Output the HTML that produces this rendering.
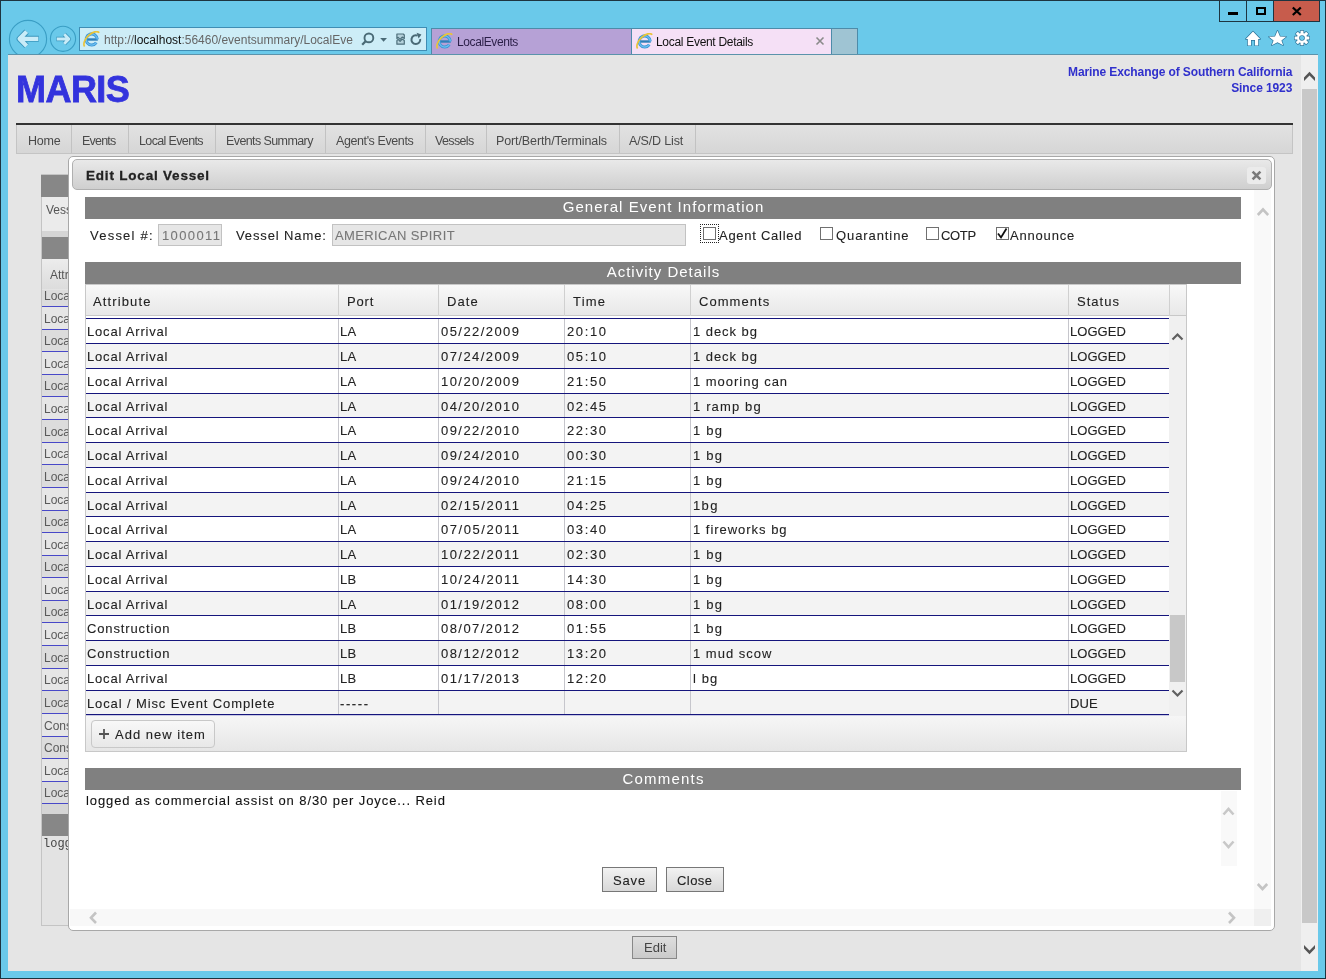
<!DOCTYPE html><html><head><meta charset="utf-8"><style>
html,body{margin:0;padding:0;}
body{width:1326px;height:979px;position:relative;overflow:hidden;background:#6ac9ea;font-family:"Liberation Sans",sans-serif;}
.t{position:absolute;white-space:nowrap;line-height:1;will-change:transform;}
.r{position:absolute;box-sizing:border-box;}
svg{position:absolute;}
</style></head><body>

<div class="r" style="left:1219px;top:0px;width:28px;height:22px;border:1px solid #1d3440;border-top:none;background:#6ac9ea"></div>
<div class="r" style="left:1246px;top:0px;width:28px;height:22px;border:1px solid #1d3440;border-top:none;background:#6ac9ea"></div>
<div class="r" style="left:1273px;top:0px;width:47px;height:22px;border:1px solid #1d3440;border-top:none;background:#c75c4c"></div>
<div class="r" style="left:1228px;top:12px;width:10px;height:3px;background:#000"></div>
<div class="r" style="left:1256px;top:7px;width:10px;height:8px;border:2px solid #000"></div>
<svg style="left:1290px;top:5px" width="14" height="12" viewBox="0 0 14 12"><path d="M2.8 2.5 L10.8 10 M10.8 2.5 L2.8 10" stroke="#000" stroke-width="2.2"/></svg>
<svg style="left:0px;top:14px" width="80" height="40" viewBox="0 14 80 40"><circle cx="28" cy="39" r="18.6" fill="none" stroke="#3a9ec4" stroke-width="1.1"/><circle cx="63" cy="38.8" r="12.6" fill="none" stroke="#3a9ec4" stroke-width="1.1"/><g fill="none" stroke-linejoin="round" stroke-linecap="butt"><path d="M38.8 38.8 H21 M26.6 31.6 L19.6 38.8 L26.6 46" stroke="#3a96bd" stroke-width="6"/><path d="M38.3 38.8 H21 M26.6 31.6 L19.6 38.8 L26.6 46" stroke="#c9ecf8" stroke-width="4.2"/><path d="M56.3 39 H68 M64.2 34.2 L68.9 39 L64.2 43.8" stroke="#3a96bd" stroke-width="4.4"/><path d="M56.8 39 H68 M64.2 34.2 L68.9 39 L64.2 43.8" stroke="#c9ecf8" stroke-width="2.8"/></g></svg>
<div class="r" style="left:79px;top:27px;width:348px;height:24px;background:#cdedf7;border:1px solid #3f8db4"></div>
<svg style="left:83px;top:31px" width="18" height="17" viewBox="0 0 18 17"><rect x="3" y="7.3" width="11.8" height="2.4" fill="#2f7fb8"/><path d="M14.3 8.4 A5.6 5.6 0 1 0 13.3 11.7" fill="none" stroke="#3b95d6" stroke-width="3"/><path d="M14.3 8.4 A5.6 5.6 0 1 0 13.3 11.7" fill="none" stroke="#6cc0f0" stroke-width="1.2"/><path d="M1.6 15.4 A9.5 5 -45 0 1 16.2 1.8" fill="none" stroke="#e9c43a" stroke-width="1.7"/></svg>
<div class="t" style="left:104.0px;top:33.8px;font-size:12px;color:#666;font-weight:normal;letter-spacing:0px;font-family:'Liberation Sans', sans-serif;">http://<span style="color:#111">localhost</span>:56460/eventsummary/LocalEve</div>
<svg style="left:360px;top:31px" width="66" height="17" viewBox="0 0 66 17"><circle cx="8.9" cy="6.9" r="4.4" fill="none" stroke="#4a6a76" stroke-width="1.9"/><path d="M5.6 10.2 L2.2 13.8" stroke="#4a6a76" stroke-width="2.2"/><path d="M20.2 6.9 H27 L23.6 10.8z" fill="#4a6a76"/><path d="M36.9 3 H43.3 L44.3 4 V7.6 L42.2 6.1 L40.1 8.4 L38.1 6.4 L36.9 7.6z" fill="#b5d2dc" stroke="#4d6f7b" stroke-width="1.2" stroke-linejoin="round"/><path d="M36.9 9.6 L38.1 8.4 L40.1 10.3 L42.2 8 L44.3 9.5 V13.2 H36.9z" fill="#b5d2dc" stroke="#4d6f7b" stroke-width="1.2" stroke-linejoin="round"/><path d="M57.6 4.6 A4.4 4.4 0 1 0 60.2 8" fill="none" stroke="#4a6a76" stroke-width="2"/><path d="M56.6 1.8 L61.4 3.6 L58.6 7.4z" fill="#4a6a76"/></svg>
<div class="r" style="left:431px;top:28px;width:200px;height:26px;background:#b6a1d6;border-left:1px solid #4d8ba9;border-top:1px solid #4d8ba9"></div>
<div class="r" style="left:631px;top:28px;width:200px;height:26px;background:#f5e0f6;border-left:1px solid #4d8ba9;border-top:1px solid #4d8ba9"></div>
<div class="r" style="left:831px;top:28px;width:27px;height:26px;background:#9fc4d3;border-left:1px solid #4d8ba9;border-top:1px solid #4d8ba9;border-right:1px solid #4d8ba9"></div>
<svg style="left:436px;top:33px" width="18" height="17" viewBox="0 0 18 17"><rect x="3" y="7.3" width="11.8" height="2.4" fill="#2f7fb8"/><path d="M14.3 8.4 A5.6 5.6 0 1 0 13.3 11.7" fill="none" stroke="#3b95d6" stroke-width="3"/><path d="M14.3 8.4 A5.6 5.6 0 1 0 13.3 11.7" fill="none" stroke="#6cc0f0" stroke-width="1.2"/><path d="M1.6 15.4 A9.5 5 -45 0 1 16.2 1.8" fill="none" stroke="#e9c43a" stroke-width="1.7"/></svg>
<svg style="left:636px;top:33px" width="18" height="17" viewBox="0 0 18 17"><rect x="3" y="7.3" width="11.8" height="2.4" fill="#2f7fb8"/><path d="M14.3 8.4 A5.6 5.6 0 1 0 13.3 11.7" fill="none" stroke="#3b95d6" stroke-width="3"/><path d="M14.3 8.4 A5.6 5.6 0 1 0 13.3 11.7" fill="none" stroke="#6cc0f0" stroke-width="1.2"/><path d="M1.6 15.4 A9.5 5 -45 0 1 16.2 1.8" fill="none" stroke="#e9c43a" stroke-width="1.7"/></svg>
<div class="t" style="left:456.5px;top:36.4px;font-size:12px;color:#2b1f48;font-weight:normal;letter-spacing:-0.4px;font-family:'Liberation Sans', sans-serif;">LocalEvents</div>
<div class="t" style="left:656.0px;top:36.4px;font-size:12px;color:#111;font-weight:normal;letter-spacing:-0.3px;font-family:'Liberation Sans', sans-serif;">Local Event Details</div>
<svg style="left:815px;top:36px" width="10" height="10" viewBox="0 0 10 10"><path d="M1.5 1.5 L8.5 8.5 M8.5 1.5 L1.5 8.5" stroke="#8a8a8a" stroke-width="1.6"/></svg>
<svg style="left:1244px;top:30px" width="70" height="18" viewBox="0 0 70 18"><g fill="#fff" stroke="#2a7096" stroke-width="1.3" paint-order="stroke" stroke-linejoin="round"><path d="M1.8 9 L9 1.5 L16.2 9 L14.2 9 L14.2 15.4 L11 15.4 L11 10 L7 10 L7 15.4 L3.8 15.4 L3.8 9z"/><path d="M33.5 0.8 L36 6.4 L42.2 6.8 L37.4 10.6 L39.2 15.2 L33.5 12.3 L27.8 15.2 L29.6 10.6 L24.8 6.8 L31 6.4z"/><path fill-rule="evenodd" d="M56.52 3.22 L56.51 0.65 L59.49 0.65 L59.48 3.22 L60.33 3.58 L62.14 1.75 L64.25 3.86 L62.42 5.67 L62.78 6.52 L65.35 6.51 L65.35 9.49 L62.78 9.48 L62.42 10.33 L64.25 12.14 L62.14 14.25 L60.33 12.42 L59.48 12.78 L59.49 15.35 L56.51 15.35 L56.52 12.78 L55.67 12.42 L53.86 14.25 L51.75 12.14 L53.58 10.33 L53.22 9.48 L50.65 9.49 L50.65 6.51 L53.22 6.52 L53.58 5.67 L51.75 3.86 L53.86 1.75 L55.67 3.58z M60.8 8.0 A2.8 2.8 0 1 0 55.2 8.0 A2.8 2.8 0 1 0 60.8 8.0z"/></g></svg>
<div class="r" style="left:8px;top:54px;width:1310px;height:917px;background:#e5e5e5"></div>
<div class="r" style="left:8px;top:54px;width:1310px;height:1px;background:#5b93ab"></div>
<div class="r" style="left:1301px;top:55px;width:17px;height:916px;background:#efefef"></div>
<div class="r" style="left:1302px;top:89px;width:15px;height:834px;background:#c8c8c8"></div>
<svg style="left:1302px;top:70px" width="15" height="14" viewBox="0 0 15 14"><path d="M2 11 V7.5 L7.5 1.8 L13 7.5 V11 L7.5 5.5z" fill="#555"/></svg>
<svg style="left:1302px;top:943px" width="15" height="14" viewBox="0 0 15 14"><path d="M2 2 V5.5 L7.5 11.2 L13 5.5 V2 L7.5 7.5z" fill="#555"/></svg>
<div class="t" style="left:16.3px;top:72.3px;font-size:36px;color:#3333dd;font-weight:bold;letter-spacing:-0.55px;font-family:'Liberation Sans', sans-serif;-webkit-text-stroke:0.8px #3333dd;">MARIS</div>
<div class="t" style="right:34px;top:63.5px;font-size:12px;font-weight:bold;color:#3030cc;text-align:right;line-height:16px;letter-spacing:-0.1px">Marine Exchange of Southern California<br>Since 1923</div>
<div class="r" style="left:16px;top:123px;width:1277px;height:2px;background:#333"></div>
<div class="r" style="left:16px;top:125px;width:1277px;height:29px;background:linear-gradient(#e2e2e2,#d6d6d6);border:1px solid #c4c4c4;border-top:none"></div>
<div class="r" style="left:71px;top:125px;width:1px;height:28px;background:#c2c2c2"></div>
<div class="r" style="left:127.5px;top:125px;width:1px;height:28px;background:#c2c2c2"></div>
<div class="r" style="left:215px;top:125px;width:1px;height:28px;background:#c2c2c2"></div>
<div class="r" style="left:324.5px;top:125px;width:1px;height:28px;background:#c2c2c2"></div>
<div class="r" style="left:424.5px;top:125px;width:1px;height:28px;background:#c2c2c2"></div>
<div class="r" style="left:485.5px;top:125px;width:1px;height:28px;background:#c2c2c2"></div>
<div class="r" style="left:618.5px;top:125px;width:1px;height:28px;background:#c2c2c2"></div>
<div class="r" style="left:694.5px;top:125px;width:1px;height:28px;background:#c2c2c2"></div>
<div class="t" style="left:27.7px;top:135.2px;font-size:12.5px;color:#4a4a4a;font-weight:normal;letter-spacing:-0.247px;font-family:'Liberation Sans', sans-serif;">Home</div>
<div class="t" style="left:82.4px;top:135.2px;font-size:12.5px;color:#4a4a4a;font-weight:normal;letter-spacing:-0.803px;font-family:'Liberation Sans', sans-serif;">Events</div>
<div class="t" style="left:139.0px;top:135.2px;font-size:12.5px;color:#4a4a4a;font-weight:normal;letter-spacing:-0.634px;font-family:'Liberation Sans', sans-serif;">Local Events</div>
<div class="t" style="left:226.0px;top:135.2px;font-size:12.5px;color:#4a4a4a;font-weight:normal;letter-spacing:-0.597px;font-family:'Liberation Sans', sans-serif;">Events Summary</div>
<div class="t" style="left:335.7px;top:135.2px;font-size:12.5px;color:#4a4a4a;font-weight:normal;letter-spacing:-0.407px;font-family:'Liberation Sans', sans-serif;">Agent's Events</div>
<div class="t" style="left:435.3px;top:135.2px;font-size:12.5px;color:#4a4a4a;font-weight:normal;letter-spacing:-0.646px;font-family:'Liberation Sans', sans-serif;">Vessels</div>
<div class="t" style="left:496.3px;top:135.2px;font-size:12.5px;color:#4a4a4a;font-weight:normal;letter-spacing:-0.112px;font-family:'Liberation Sans', sans-serif;">Port/Berth/Terminals</div>
<div class="t" style="left:629.1px;top:135.2px;font-size:12.5px;color:#4a4a4a;font-weight:normal;letter-spacing:-0.153px;font-family:'Liberation Sans', sans-serif;">A/S/D List</div>
<div class="r" style="left:41px;top:174px;width:79px;height:752px;background:#e3e3e3;border:1px solid #c4c4c4"></div>
<div class="r" style="left:41px;top:175px;width:79px;height:22px;background:#878787"></div>
<div class="r" style="left:42px;top:197px;width:78px;height:34px;background:#ebebeb"></div>
<div class="t" style="left:46.0px;top:203.8px;font-size:12px;color:#555;font-weight:normal;letter-spacing:0px;font-family:'Liberation Sans', sans-serif;">Vessel</div>
<div class="r" style="left:42px;top:231px;width:78px;height:6px;background:#d5d5d5"></div>
<div class="r" style="left:42px;top:237px;width:78px;height:22px;background:#878787"></div>
<div class="r" style="left:42px;top:259px;width:78px;height:30px;background:linear-gradient(#ececec,#dcdcdc)"></div>
<div class="t" style="left:50.0px;top:268.8px;font-size:12px;color:#555;font-weight:normal;letter-spacing:0px;font-family:'Liberation Sans', sans-serif;">Attribute</div>
<div class="r" style="left:42px;top:290px;width:78px;height:16px;background:#dcdcdc"></div>
<div class="r" style="left:42px;top:306px;width:78px;height:1px;background:#4848c8"></div>
<div class="t" style="left:44.0px;top:289.5px;font-size:12px;color:#5a5a5a;font-weight:normal;letter-spacing:0px;font-family:'Liberation Sans', sans-serif;">Local</div>
<div class="r" style="left:42px;top:307px;width:78px;height:22px;background:#e6e6e6"></div>
<div class="r" style="left:42px;top:329px;width:78px;height:1px;background:#4848c8"></div>
<div class="t" style="left:44.0px;top:312.5px;font-size:12px;color:#5a5a5a;font-weight:normal;letter-spacing:0px;font-family:'Liberation Sans', sans-serif;">Local</div>
<div class="r" style="left:42px;top:330px;width:78px;height:21px;background:#dcdcdc"></div>
<div class="r" style="left:42px;top:351px;width:78px;height:1px;background:#4848c8"></div>
<div class="t" style="left:44.0px;top:334.5px;font-size:12px;color:#5a5a5a;font-weight:normal;letter-spacing:0px;font-family:'Liberation Sans', sans-serif;">Local</div>
<div class="r" style="left:42px;top:352px;width:78px;height:22px;background:#e6e6e6"></div>
<div class="r" style="left:42px;top:374px;width:78px;height:1px;background:#4848c8"></div>
<div class="t" style="left:44.0px;top:357.5px;font-size:12px;color:#5a5a5a;font-weight:normal;letter-spacing:0px;font-family:'Liberation Sans', sans-serif;">Local</div>
<div class="r" style="left:42px;top:375px;width:78px;height:21px;background:#dcdcdc"></div>
<div class="r" style="left:42px;top:396px;width:78px;height:1px;background:#4848c8"></div>
<div class="t" style="left:44.0px;top:379.5px;font-size:12px;color:#5a5a5a;font-weight:normal;letter-spacing:0px;font-family:'Liberation Sans', sans-serif;">Local</div>
<div class="r" style="left:42px;top:397px;width:78px;height:22px;background:#e6e6e6"></div>
<div class="r" style="left:42px;top:419px;width:78px;height:1px;background:#4848c8"></div>
<div class="t" style="left:44.0px;top:402.5px;font-size:12px;color:#5a5a5a;font-weight:normal;letter-spacing:0px;font-family:'Liberation Sans', sans-serif;">Local</div>
<div class="r" style="left:42px;top:420px;width:78px;height:22px;background:#dcdcdc"></div>
<div class="r" style="left:42px;top:442px;width:78px;height:1px;background:#4848c8"></div>
<div class="t" style="left:44.0px;top:425.5px;font-size:12px;color:#5a5a5a;font-weight:normal;letter-spacing:0px;font-family:'Liberation Sans', sans-serif;">Local</div>
<div class="r" style="left:42px;top:443px;width:78px;height:21px;background:#e6e6e6"></div>
<div class="r" style="left:42px;top:464px;width:78px;height:1px;background:#4848c8"></div>
<div class="t" style="left:44.0px;top:447.5px;font-size:12px;color:#5a5a5a;font-weight:normal;letter-spacing:0px;font-family:'Liberation Sans', sans-serif;">Local</div>
<div class="r" style="left:42px;top:465px;width:78px;height:22px;background:#dcdcdc"></div>
<div class="r" style="left:42px;top:487px;width:78px;height:1px;background:#4848c8"></div>
<div class="t" style="left:44.0px;top:470.5px;font-size:12px;color:#5a5a5a;font-weight:normal;letter-spacing:0px;font-family:'Liberation Sans', sans-serif;">Local</div>
<div class="r" style="left:42px;top:488px;width:78px;height:22px;background:#e6e6e6"></div>
<div class="r" style="left:42px;top:510px;width:78px;height:1px;background:#4848c8"></div>
<div class="t" style="left:44.0px;top:493.5px;font-size:12px;color:#5a5a5a;font-weight:normal;letter-spacing:0px;font-family:'Liberation Sans', sans-serif;">Local</div>
<div class="r" style="left:42px;top:511px;width:78px;height:21px;background:#dcdcdc"></div>
<div class="r" style="left:42px;top:532px;width:78px;height:1px;background:#4848c8"></div>
<div class="t" style="left:44.0px;top:515.5px;font-size:12px;color:#5a5a5a;font-weight:normal;letter-spacing:0px;font-family:'Liberation Sans', sans-serif;">Local</div>
<div class="r" style="left:42px;top:533px;width:78px;height:22px;background:#e6e6e6"></div>
<div class="r" style="left:42px;top:555px;width:78px;height:1px;background:#4848c8"></div>
<div class="t" style="left:44.0px;top:538.5px;font-size:12px;color:#5a5a5a;font-weight:normal;letter-spacing:0px;font-family:'Liberation Sans', sans-serif;">Local</div>
<div class="r" style="left:42px;top:556px;width:78px;height:21px;background:#dcdcdc"></div>
<div class="r" style="left:42px;top:577px;width:78px;height:1px;background:#4848c8"></div>
<div class="t" style="left:44.0px;top:560.5px;font-size:12px;color:#5a5a5a;font-weight:normal;letter-spacing:0px;font-family:'Liberation Sans', sans-serif;">Local</div>
<div class="r" style="left:42px;top:578px;width:78px;height:22px;background:#e6e6e6"></div>
<div class="r" style="left:42px;top:600px;width:78px;height:1px;background:#4848c8"></div>
<div class="t" style="left:44.0px;top:583.5px;font-size:12px;color:#5a5a5a;font-weight:normal;letter-spacing:0px;font-family:'Liberation Sans', sans-serif;">Local</div>
<div class="r" style="left:42px;top:601px;width:78px;height:21px;background:#dcdcdc"></div>
<div class="r" style="left:42px;top:622px;width:78px;height:1px;background:#4848c8"></div>
<div class="t" style="left:44.0px;top:605.5px;font-size:12px;color:#5a5a5a;font-weight:normal;letter-spacing:0px;font-family:'Liberation Sans', sans-serif;">Local</div>
<div class="r" style="left:42px;top:623px;width:78px;height:22px;background:#e6e6e6"></div>
<div class="r" style="left:42px;top:645px;width:78px;height:1px;background:#4848c8"></div>
<div class="t" style="left:44.0px;top:628.5px;font-size:12px;color:#5a5a5a;font-weight:normal;letter-spacing:0px;font-family:'Liberation Sans', sans-serif;">Local</div>
<div class="r" style="left:42px;top:646px;width:78px;height:22px;background:#dcdcdc"></div>
<div class="r" style="left:42px;top:668px;width:78px;height:1px;background:#4848c8"></div>
<div class="t" style="left:44.0px;top:651.5px;font-size:12px;color:#5a5a5a;font-weight:normal;letter-spacing:0px;font-family:'Liberation Sans', sans-serif;">Local</div>
<div class="r" style="left:42px;top:669px;width:78px;height:21px;background:#e6e6e6"></div>
<div class="r" style="left:42px;top:690px;width:78px;height:1px;background:#4848c8"></div>
<div class="t" style="left:44.0px;top:673.5px;font-size:12px;color:#5a5a5a;font-weight:normal;letter-spacing:0px;font-family:'Liberation Sans', sans-serif;">Local</div>
<div class="r" style="left:42px;top:691px;width:78px;height:22px;background:#dcdcdc"></div>
<div class="r" style="left:42px;top:713px;width:78px;height:1px;background:#4848c8"></div>
<div class="t" style="left:44.0px;top:696.5px;font-size:12px;color:#5a5a5a;font-weight:normal;letter-spacing:0px;font-family:'Liberation Sans', sans-serif;">Local</div>
<div class="r" style="left:42px;top:714px;width:78px;height:22px;background:#e6e6e6"></div>
<div class="r" style="left:42px;top:736px;width:78px;height:1px;background:#4848c8"></div>
<div class="t" style="left:44.0px;top:719.5px;font-size:12px;color:#5a5a5a;font-weight:normal;letter-spacing:0px;font-family:'Liberation Sans', sans-serif;">Construction</div>
<div class="r" style="left:42px;top:737px;width:78px;height:21px;background:#dcdcdc"></div>
<div class="r" style="left:42px;top:758px;width:78px;height:1px;background:#4848c8"></div>
<div class="t" style="left:44.0px;top:741.5px;font-size:12px;color:#5a5a5a;font-weight:normal;letter-spacing:0px;font-family:'Liberation Sans', sans-serif;">Construction</div>
<div class="r" style="left:42px;top:759px;width:78px;height:22px;background:#e6e6e6"></div>
<div class="r" style="left:42px;top:781px;width:78px;height:1px;background:#4848c8"></div>
<div class="t" style="left:44.0px;top:764.5px;font-size:12px;color:#5a5a5a;font-weight:normal;letter-spacing:0px;font-family:'Liberation Sans', sans-serif;">Local</div>
<div class="r" style="left:42px;top:782px;width:78px;height:21px;background:#dcdcdc"></div>
<div class="r" style="left:42px;top:803px;width:78px;height:1px;background:#4848c8"></div>
<div class="t" style="left:44.0px;top:786.5px;font-size:12px;color:#5a5a5a;font-weight:normal;letter-spacing:0px;font-family:'Liberation Sans', sans-serif;">Local</div>
<div class="r" style="left:42px;top:804px;width:78px;height:10px;background:#d5d5d5"></div>
<div class="r" style="left:42px;top:814px;width:78px;height:22px;background:#878787"></div>
<div class="t" style="left:43.0px;top:837.8px;font-size:12px;color:#444;font-weight:normal;letter-spacing:0px;font-family:'Liberation Mono', monospace;">logged</div>
<div class="r" style="left:68px;top:156px;width:1207px;height:775px;background:#fff;border:1px solid #a8a8a8;border-radius:5px"></div>
<div class="r" style="left:72px;top:159px;width:1200px;height:31px;background:linear-gradient(#e9e9e9,#cfcfcf);border:1px solid #b0b0b0;border-radius:5px"></div>
<div class="t" style="left:86.2px;top:169.1px;font-size:13.5px;color:#222;font-weight:bold;letter-spacing:0.8px;font-family:'Liberation Sans', sans-serif;-webkit-text-stroke:0.3px #222;">Edit Local Vessel</div>
<div class="r" style="left:1247px;top:167px;width:19px;height:17px;background:#ebebeb;border-radius:3px"></div>
<svg style="left:1250px;top:169px" width="13" height="13" viewBox="0 0 13 13"><path d="M2.6 2.6 L10.4 10.4 M10.4 2.6 L2.6 10.4" stroke="#7a7a7a" stroke-width="2.6"/></svg>
<div class="r" style="left:1254px;top:190px;width:17px;height:719px;background:#f9f9f9"></div>
<svg style="left:1256px;top:205px" width="13" height="12" viewBox="0 0 13 12"><path d="M1.8 10 L7 4.5 L12.2 10" fill="none" stroke="#c4c4c4" stroke-width="2.6"/></svg>
<svg style="left:1256px;top:881px" width="13" height="12" viewBox="0 0 13 12"><path d="M1.8 3 L6.5 8 L11.2 3" fill="none" stroke="#c4c4c4" stroke-width="2.6"/></svg>
<div class="r" style="left:70px;top:909px;width:1184px;height:17px;background:#f8f8f8"></div>
<div class="r" style="left:1254px;top:909px;width:17px;height:17px;background:#efefef"></div>
<svg style="left:87px;top:911px" width="12" height="14" viewBox="0 0 12 14"><path d="M9 1.5 L4 6.8 L9 12" fill="none" stroke="#c4c4c4" stroke-width="2.6"/></svg>
<svg style="left:1226px;top:911px" width="12" height="14" viewBox="0 0 12 14"><path d="M3 1.5 L8 6.8 L3 12" fill="none" stroke="#c4c4c4" stroke-width="2.6"/></svg>
<div class="r" style="left:85px;top:197px;width:1156px;height:22px;background:#808080"></div>
<div class="t" style="left:85px;width:1156px;top:199.3px;font-size:15px;color:#fff;text-align:center;letter-spacing:1.064px;text-indent:1.064px">General Event Information</div>
<div class="t" style="left:89.6px;top:228.7px;font-size:13px;color:#222;font-weight:normal;letter-spacing:1.232px;font-family:'Liberation Sans', sans-serif;-webkit-text-stroke:0.1px currentColor;">Vessel #:</div>
<div class="r" style="left:158px;top:224px;width:64px;height:22px;background:#e6e6e6;border:1px solid #c2c2c2"></div>
<div class="t" style="left:161.8px;top:228.7px;font-size:13px;color:#777;font-weight:normal;letter-spacing:1.372px;font-family:'Liberation Sans', sans-serif;-webkit-text-stroke:0.1px currentColor;">1000011</div>
<div class="t" style="left:236.0px;top:228.7px;font-size:13px;color:#222;font-weight:normal;letter-spacing:0.882px;font-family:'Liberation Sans', sans-serif;-webkit-text-stroke:0.1px currentColor;">Vessel Name:</div>
<div class="r" style="left:332px;top:224px;width:354px;height:22px;background:#e6e6e6;border:1px solid #c2c2c2"></div>
<div class="t" style="left:334.6px;top:228.7px;font-size:13px;color:#777;font-weight:normal;letter-spacing:0.389px;font-family:'Liberation Sans', sans-serif;-webkit-text-stroke:0.1px currentColor;">AMERICAN SPIRIT</div>
<div class="r" style="left:700px;top:224px;width:19px;height:19px;border:1px dotted #222"></div>
<div class="r" style="left:703px;top:227px;width:13px;height:13px;border:1px solid #707070;background:#fff"></div>
<div class="r" style="left:819.5px;top:227px;width:13.0px;height:13px;border:1px solid #707070;background:#fff"></div>
<div class="r" style="left:926px;top:227px;width:13px;height:13px;border:1px solid #707070;background:#fff"></div>
<div class="r" style="left:995.5px;top:227px;width:13.0px;height:13px;border:1px solid #707070;background:#fff"></div>
<svg style="left:996px;top:227px" width="12" height="13" viewBox="0 0 12 13"><path d="M2 6.5 L5 10.5 L10.5 1.5" fill="none" stroke="#111" stroke-width="1.8"/></svg>
<div class="t" style="left:719.0px;top:228.5px;font-size:13px;color:#222;font-weight:normal;letter-spacing:0.735px;font-family:'Liberation Sans', sans-serif;-webkit-text-stroke:0.1px currentColor;">Agent Called</div>
<div class="t" style="left:835.5px;top:228.5px;font-size:13px;color:#222;font-weight:normal;letter-spacing:0.912px;font-family:'Liberation Sans', sans-serif;-webkit-text-stroke:0.1px currentColor;">Quarantine</div>
<div class="t" style="left:941.0px;top:228.5px;font-size:13px;color:#222;font-weight:normal;letter-spacing:-0.32px;font-family:'Liberation Sans', sans-serif;-webkit-text-stroke:0.1px currentColor;">COTP</div>
<div class="t" style="left:1010.3px;top:228.5px;font-size:13px;color:#222;font-weight:normal;letter-spacing:0.81px;font-family:'Liberation Sans', sans-serif;-webkit-text-stroke:0.1px currentColor;">Announce</div>
<div class="r" style="left:85px;top:262px;width:1156px;height:22px;background:#808080"></div>
<div class="t" style="left:85px;width:1156px;top:264.0px;font-size:15px;color:#fff;text-align:center;letter-spacing:1.007px;text-indent:1.007px">Activity Details</div>
<div class="r" style="left:85px;top:284px;width:1102px;height:468px;background:#fff;border:1px solid #c8c8c8"></div>
<div class="r" style="left:86px;top:285px;width:1100px;height:31px;background:linear-gradient(#f8f8f8,#e8e8e8);border-bottom:1px solid #c8c8c8"></div>
<div class="r" style="left:338px;top:285px;width:1px;height:31px;background:#d0d0d0"></div>
<div class="r" style="left:438px;top:285px;width:1px;height:31px;background:#d0d0d0"></div>
<div class="r" style="left:564px;top:285px;width:1px;height:31px;background:#d0d0d0"></div>
<div class="r" style="left:690px;top:285px;width:1px;height:31px;background:#d0d0d0"></div>
<div class="r" style="left:1068px;top:285px;width:1px;height:31px;background:#d0d0d0"></div>
<div class="r" style="left:1169px;top:285px;width:1px;height:31px;background:#d0d0d0"></div>
<div class="t" style="left:93.4px;top:294.9px;font-size:13px;color:#222;font-weight:normal;letter-spacing:1.129px;font-family:'Liberation Sans', sans-serif;-webkit-text-stroke:0.1px currentColor;">Attribute</div>
<div class="t" style="left:346.8px;top:294.9px;font-size:13px;color:#222;font-weight:normal;letter-spacing:0.854px;font-family:'Liberation Sans', sans-serif;-webkit-text-stroke:0.1px currentColor;">Port</div>
<div class="t" style="left:447.0px;top:294.9px;font-size:13px;color:#222;font-weight:normal;letter-spacing:1.082px;font-family:'Liberation Sans', sans-serif;-webkit-text-stroke:0.1px currentColor;">Date</div>
<div class="t" style="left:572.7px;top:294.9px;font-size:13px;color:#222;font-weight:normal;letter-spacing:1.187px;font-family:'Liberation Sans', sans-serif;-webkit-text-stroke:0.1px currentColor;">Time</div>
<div class="t" style="left:698.8px;top:294.9px;font-size:13px;color:#222;font-weight:normal;letter-spacing:1.041px;font-family:'Liberation Sans', sans-serif;-webkit-text-stroke:0.1px currentColor;">Comments</div>
<div class="t" style="left:1076.7px;top:294.9px;font-size:13px;color:#222;font-weight:normal;letter-spacing:1.019px;font-family:'Liberation Sans', sans-serif;-webkit-text-stroke:0.1px currentColor;">Status</div>
<div class="r" style="left:86px;top:319px;width:1083px;height:24px;background:#ffffff"></div>
<div class="r" style="left:338px;top:319px;width:1px;height:24px;background:#c6c6cc"></div>
<div class="r" style="left:438px;top:319px;width:1px;height:24px;background:#c6c6cc"></div>
<div class="r" style="left:564px;top:319px;width:1px;height:24px;background:#c6c6cc"></div>
<div class="r" style="left:690px;top:319px;width:1px;height:24px;background:#c6c6cc"></div>
<div class="r" style="left:1068px;top:319px;width:1px;height:24px;background:#c6c6cc"></div>
<div class="t" style="left:87.0px;top:324.6px;font-size:13px;color:#222;font-weight:normal;letter-spacing:0.806px;font-family:'Liberation Sans', sans-serif;-webkit-text-stroke:0.1px currentColor;">Local Arrival</div>
<div class="t" style="left:340.4px;top:324.6px;font-size:13px;color:#222;font-weight:normal;letter-spacing:0.233px;font-family:'Liberation Sans', sans-serif;-webkit-text-stroke:0.1px currentColor;">LA</div>
<div class="t" style="left:440.6px;top:324.6px;font-size:13px;color:#222;font-weight:normal;letter-spacing:1.435px;font-family:'Liberation Sans', sans-serif;-webkit-text-stroke:0.1px currentColor;">05/22/2009</div>
<div class="t" style="left:567.1px;top:324.6px;font-size:13px;color:#222;font-weight:normal;letter-spacing:1.611px;font-family:'Liberation Sans', sans-serif;-webkit-text-stroke:0.1px currentColor;">20:10</div>
<div class="t" style="left:693.2px;top:324.6px;font-size:13px;color:#222;font-weight:normal;letter-spacing:0.945px;font-family:'Liberation Sans', sans-serif;-webkit-text-stroke:0.1px currentColor;">1 deck bg</div>
<div class="t" style="left:1070.3px;top:324.6px;font-size:13px;color:#222;font-weight:normal;letter-spacing:0.047px;font-family:'Liberation Sans', sans-serif;-webkit-text-stroke:0.1px currentColor;">LOGGED</div>
<div class="r" style="left:86px;top:344px;width:1083px;height:24px;background:#f3f3f3"></div>
<div class="r" style="left:338px;top:344px;width:1px;height:24px;background:#c6c6cc"></div>
<div class="r" style="left:438px;top:344px;width:1px;height:24px;background:#c6c6cc"></div>
<div class="r" style="left:564px;top:344px;width:1px;height:24px;background:#c6c6cc"></div>
<div class="r" style="left:690px;top:344px;width:1px;height:24px;background:#c6c6cc"></div>
<div class="r" style="left:1068px;top:344px;width:1px;height:24px;background:#c6c6cc"></div>
<div class="t" style="left:87.0px;top:349.6px;font-size:13px;color:#222;font-weight:normal;letter-spacing:0.806px;font-family:'Liberation Sans', sans-serif;-webkit-text-stroke:0.1px currentColor;">Local Arrival</div>
<div class="t" style="left:340.4px;top:349.6px;font-size:13px;color:#222;font-weight:normal;letter-spacing:0.233px;font-family:'Liberation Sans', sans-serif;-webkit-text-stroke:0.1px currentColor;">LA</div>
<div class="t" style="left:440.6px;top:349.6px;font-size:13px;color:#222;font-weight:normal;letter-spacing:1.435px;font-family:'Liberation Sans', sans-serif;-webkit-text-stroke:0.1px currentColor;">07/24/2009</div>
<div class="t" style="left:567.1px;top:349.6px;font-size:13px;color:#222;font-weight:normal;letter-spacing:1.611px;font-family:'Liberation Sans', sans-serif;-webkit-text-stroke:0.1px currentColor;">05:10</div>
<div class="t" style="left:693.2px;top:349.6px;font-size:13px;color:#222;font-weight:normal;letter-spacing:0.945px;font-family:'Liberation Sans', sans-serif;-webkit-text-stroke:0.1px currentColor;">1 deck bg</div>
<div class="t" style="left:1070.3px;top:349.6px;font-size:13px;color:#222;font-weight:normal;letter-spacing:0.047px;font-family:'Liberation Sans', sans-serif;-webkit-text-stroke:0.1px currentColor;">LOGGED</div>
<div class="r" style="left:86px;top:369px;width:1083px;height:24px;background:#ffffff"></div>
<div class="r" style="left:338px;top:369px;width:1px;height:24px;background:#c6c6cc"></div>
<div class="r" style="left:438px;top:369px;width:1px;height:24px;background:#c6c6cc"></div>
<div class="r" style="left:564px;top:369px;width:1px;height:24px;background:#c6c6cc"></div>
<div class="r" style="left:690px;top:369px;width:1px;height:24px;background:#c6c6cc"></div>
<div class="r" style="left:1068px;top:369px;width:1px;height:24px;background:#c6c6cc"></div>
<div class="t" style="left:87.0px;top:374.6px;font-size:13px;color:#222;font-weight:normal;letter-spacing:0.806px;font-family:'Liberation Sans', sans-serif;-webkit-text-stroke:0.1px currentColor;">Local Arrival</div>
<div class="t" style="left:340.4px;top:374.6px;font-size:13px;color:#222;font-weight:normal;letter-spacing:0.233px;font-family:'Liberation Sans', sans-serif;-webkit-text-stroke:0.1px currentColor;">LA</div>
<div class="t" style="left:440.6px;top:374.6px;font-size:13px;color:#222;font-weight:normal;letter-spacing:1.435px;font-family:'Liberation Sans', sans-serif;-webkit-text-stroke:0.1px currentColor;">10/20/2009</div>
<div class="t" style="left:567.1px;top:374.6px;font-size:13px;color:#222;font-weight:normal;letter-spacing:1.611px;font-family:'Liberation Sans', sans-serif;-webkit-text-stroke:0.1px currentColor;">21:50</div>
<div class="t" style="left:693.2px;top:374.6px;font-size:13px;color:#222;font-weight:normal;letter-spacing:0.977px;font-family:'Liberation Sans', sans-serif;-webkit-text-stroke:0.1px currentColor;">1 mooring can</div>
<div class="t" style="left:1070.3px;top:374.6px;font-size:13px;color:#222;font-weight:normal;letter-spacing:0.047px;font-family:'Liberation Sans', sans-serif;-webkit-text-stroke:0.1px currentColor;">LOGGED</div>
<div class="r" style="left:86px;top:394px;width:1083px;height:23px;background:#f3f3f3"></div>
<div class="r" style="left:338px;top:394px;width:1px;height:23px;background:#c6c6cc"></div>
<div class="r" style="left:438px;top:394px;width:1px;height:23px;background:#c6c6cc"></div>
<div class="r" style="left:564px;top:394px;width:1px;height:23px;background:#c6c6cc"></div>
<div class="r" style="left:690px;top:394px;width:1px;height:23px;background:#c6c6cc"></div>
<div class="r" style="left:1068px;top:394px;width:1px;height:23px;background:#c6c6cc"></div>
<div class="t" style="left:87.0px;top:399.6px;font-size:13px;color:#222;font-weight:normal;letter-spacing:0.806px;font-family:'Liberation Sans', sans-serif;-webkit-text-stroke:0.1px currentColor;">Local Arrival</div>
<div class="t" style="left:340.4px;top:399.6px;font-size:13px;color:#222;font-weight:normal;letter-spacing:0.233px;font-family:'Liberation Sans', sans-serif;-webkit-text-stroke:0.1px currentColor;">LA</div>
<div class="t" style="left:440.6px;top:399.6px;font-size:13px;color:#222;font-weight:normal;letter-spacing:1.435px;font-family:'Liberation Sans', sans-serif;-webkit-text-stroke:0.1px currentColor;">04/20/2010</div>
<div class="t" style="left:567.1px;top:399.6px;font-size:13px;color:#222;font-weight:normal;letter-spacing:1.611px;font-family:'Liberation Sans', sans-serif;-webkit-text-stroke:0.1px currentColor;">02:45</div>
<div class="t" style="left:693.2px;top:399.6px;font-size:13px;color:#222;font-weight:normal;letter-spacing:1.15px;font-family:'Liberation Sans', sans-serif;-webkit-text-stroke:0.1px currentColor;">1 ramp bg</div>
<div class="t" style="left:1070.3px;top:399.6px;font-size:13px;color:#222;font-weight:normal;letter-spacing:0.047px;font-family:'Liberation Sans', sans-serif;-webkit-text-stroke:0.1px currentColor;">LOGGED</div>
<div class="r" style="left:86px;top:418px;width:1083px;height:24px;background:#ffffff"></div>
<div class="r" style="left:338px;top:418px;width:1px;height:24px;background:#c6c6cc"></div>
<div class="r" style="left:438px;top:418px;width:1px;height:24px;background:#c6c6cc"></div>
<div class="r" style="left:564px;top:418px;width:1px;height:24px;background:#c6c6cc"></div>
<div class="r" style="left:690px;top:418px;width:1px;height:24px;background:#c6c6cc"></div>
<div class="r" style="left:1068px;top:418px;width:1px;height:24px;background:#c6c6cc"></div>
<div class="t" style="left:87.0px;top:423.6px;font-size:13px;color:#222;font-weight:normal;letter-spacing:0.806px;font-family:'Liberation Sans', sans-serif;-webkit-text-stroke:0.1px currentColor;">Local Arrival</div>
<div class="t" style="left:340.4px;top:423.6px;font-size:13px;color:#222;font-weight:normal;letter-spacing:0.233px;font-family:'Liberation Sans', sans-serif;-webkit-text-stroke:0.1px currentColor;">LA</div>
<div class="t" style="left:440.6px;top:423.6px;font-size:13px;color:#222;font-weight:normal;letter-spacing:1.435px;font-family:'Liberation Sans', sans-serif;-webkit-text-stroke:0.1px currentColor;">09/22/2010</div>
<div class="t" style="left:567.1px;top:423.6px;font-size:13px;color:#222;font-weight:normal;letter-spacing:1.611px;font-family:'Liberation Sans', sans-serif;-webkit-text-stroke:0.1px currentColor;">22:30</div>
<div class="t" style="left:693.2px;top:423.6px;font-size:13px;color:#222;font-weight:normal;letter-spacing:1.247px;font-family:'Liberation Sans', sans-serif;-webkit-text-stroke:0.1px currentColor;">1 bg</div>
<div class="t" style="left:1070.3px;top:423.6px;font-size:13px;color:#222;font-weight:normal;letter-spacing:0.047px;font-family:'Liberation Sans', sans-serif;-webkit-text-stroke:0.1px currentColor;">LOGGED</div>
<div class="r" style="left:86px;top:443px;width:1083px;height:24px;background:#f3f3f3"></div>
<div class="r" style="left:338px;top:443px;width:1px;height:24px;background:#c6c6cc"></div>
<div class="r" style="left:438px;top:443px;width:1px;height:24px;background:#c6c6cc"></div>
<div class="r" style="left:564px;top:443px;width:1px;height:24px;background:#c6c6cc"></div>
<div class="r" style="left:690px;top:443px;width:1px;height:24px;background:#c6c6cc"></div>
<div class="r" style="left:1068px;top:443px;width:1px;height:24px;background:#c6c6cc"></div>
<div class="t" style="left:87.0px;top:448.6px;font-size:13px;color:#222;font-weight:normal;letter-spacing:0.806px;font-family:'Liberation Sans', sans-serif;-webkit-text-stroke:0.1px currentColor;">Local Arrival</div>
<div class="t" style="left:340.4px;top:448.6px;font-size:13px;color:#222;font-weight:normal;letter-spacing:0.233px;font-family:'Liberation Sans', sans-serif;-webkit-text-stroke:0.1px currentColor;">LA</div>
<div class="t" style="left:440.6px;top:448.6px;font-size:13px;color:#222;font-weight:normal;letter-spacing:1.435px;font-family:'Liberation Sans', sans-serif;-webkit-text-stroke:0.1px currentColor;">09/24/2010</div>
<div class="t" style="left:567.1px;top:448.6px;font-size:13px;color:#222;font-weight:normal;letter-spacing:1.611px;font-family:'Liberation Sans', sans-serif;-webkit-text-stroke:0.1px currentColor;">00:30</div>
<div class="t" style="left:693.2px;top:448.6px;font-size:13px;color:#222;font-weight:normal;letter-spacing:1.247px;font-family:'Liberation Sans', sans-serif;-webkit-text-stroke:0.1px currentColor;">1 bg</div>
<div class="t" style="left:1070.3px;top:448.6px;font-size:13px;color:#222;font-weight:normal;letter-spacing:0.047px;font-family:'Liberation Sans', sans-serif;-webkit-text-stroke:0.1px currentColor;">LOGGED</div>
<div class="r" style="left:86px;top:468px;width:1083px;height:24px;background:#ffffff"></div>
<div class="r" style="left:338px;top:468px;width:1px;height:24px;background:#c6c6cc"></div>
<div class="r" style="left:438px;top:468px;width:1px;height:24px;background:#c6c6cc"></div>
<div class="r" style="left:564px;top:468px;width:1px;height:24px;background:#c6c6cc"></div>
<div class="r" style="left:690px;top:468px;width:1px;height:24px;background:#c6c6cc"></div>
<div class="r" style="left:1068px;top:468px;width:1px;height:24px;background:#c6c6cc"></div>
<div class="t" style="left:87.0px;top:473.6px;font-size:13px;color:#222;font-weight:normal;letter-spacing:0.806px;font-family:'Liberation Sans', sans-serif;-webkit-text-stroke:0.1px currentColor;">Local Arrival</div>
<div class="t" style="left:340.4px;top:473.6px;font-size:13px;color:#222;font-weight:normal;letter-spacing:0.233px;font-family:'Liberation Sans', sans-serif;-webkit-text-stroke:0.1px currentColor;">LA</div>
<div class="t" style="left:440.6px;top:473.6px;font-size:13px;color:#222;font-weight:normal;letter-spacing:1.435px;font-family:'Liberation Sans', sans-serif;-webkit-text-stroke:0.1px currentColor;">09/24/2010</div>
<div class="t" style="left:567.1px;top:473.6px;font-size:13px;color:#222;font-weight:normal;letter-spacing:1.611px;font-family:'Liberation Sans', sans-serif;-webkit-text-stroke:0.1px currentColor;">21:15</div>
<div class="t" style="left:693.2px;top:473.6px;font-size:13px;color:#222;font-weight:normal;letter-spacing:1.247px;font-family:'Liberation Sans', sans-serif;-webkit-text-stroke:0.1px currentColor;">1 bg</div>
<div class="t" style="left:1070.3px;top:473.6px;font-size:13px;color:#222;font-weight:normal;letter-spacing:0.047px;font-family:'Liberation Sans', sans-serif;-webkit-text-stroke:0.1px currentColor;">LOGGED</div>
<div class="r" style="left:86px;top:493px;width:1083px;height:23px;background:#f3f3f3"></div>
<div class="r" style="left:338px;top:493px;width:1px;height:23px;background:#c6c6cc"></div>
<div class="r" style="left:438px;top:493px;width:1px;height:23px;background:#c6c6cc"></div>
<div class="r" style="left:564px;top:493px;width:1px;height:23px;background:#c6c6cc"></div>
<div class="r" style="left:690px;top:493px;width:1px;height:23px;background:#c6c6cc"></div>
<div class="r" style="left:1068px;top:493px;width:1px;height:23px;background:#c6c6cc"></div>
<div class="t" style="left:87.0px;top:498.6px;font-size:13px;color:#222;font-weight:normal;letter-spacing:0.806px;font-family:'Liberation Sans', sans-serif;-webkit-text-stroke:0.1px currentColor;">Local Arrival</div>
<div class="t" style="left:340.4px;top:498.6px;font-size:13px;color:#222;font-weight:normal;letter-spacing:0.233px;font-family:'Liberation Sans', sans-serif;-webkit-text-stroke:0.1px currentColor;">LA</div>
<div class="t" style="left:440.6px;top:498.6px;font-size:13px;color:#222;font-weight:normal;letter-spacing:1.542px;font-family:'Liberation Sans', sans-serif;-webkit-text-stroke:0.1px currentColor;">02/15/2011</div>
<div class="t" style="left:567.1px;top:498.6px;font-size:13px;color:#222;font-weight:normal;letter-spacing:1.611px;font-family:'Liberation Sans', sans-serif;-webkit-text-stroke:0.1px currentColor;">04:25</div>
<div class="t" style="left:693.2px;top:498.6px;font-size:13px;color:#222;font-weight:normal;letter-spacing:1.388px;font-family:'Liberation Sans', sans-serif;-webkit-text-stroke:0.1px currentColor;">1bg</div>
<div class="t" style="left:1070.3px;top:498.6px;font-size:13px;color:#222;font-weight:normal;letter-spacing:0.047px;font-family:'Liberation Sans', sans-serif;-webkit-text-stroke:0.1px currentColor;">LOGGED</div>
<div class="r" style="left:86px;top:517px;width:1083px;height:24px;background:#ffffff"></div>
<div class="r" style="left:338px;top:517px;width:1px;height:24px;background:#c6c6cc"></div>
<div class="r" style="left:438px;top:517px;width:1px;height:24px;background:#c6c6cc"></div>
<div class="r" style="left:564px;top:517px;width:1px;height:24px;background:#c6c6cc"></div>
<div class="r" style="left:690px;top:517px;width:1px;height:24px;background:#c6c6cc"></div>
<div class="r" style="left:1068px;top:517px;width:1px;height:24px;background:#c6c6cc"></div>
<div class="t" style="left:87.0px;top:522.6px;font-size:13px;color:#222;font-weight:normal;letter-spacing:0.806px;font-family:'Liberation Sans', sans-serif;-webkit-text-stroke:0.1px currentColor;">Local Arrival</div>
<div class="t" style="left:340.4px;top:522.6px;font-size:13px;color:#222;font-weight:normal;letter-spacing:0.233px;font-family:'Liberation Sans', sans-serif;-webkit-text-stroke:0.1px currentColor;">LA</div>
<div class="t" style="left:440.6px;top:522.6px;font-size:13px;color:#222;font-weight:normal;letter-spacing:1.542px;font-family:'Liberation Sans', sans-serif;-webkit-text-stroke:0.1px currentColor;">07/05/2011</div>
<div class="t" style="left:567.1px;top:522.6px;font-size:13px;color:#222;font-weight:normal;letter-spacing:1.611px;font-family:'Liberation Sans', sans-serif;-webkit-text-stroke:0.1px currentColor;">03:40</div>
<div class="t" style="left:693.2px;top:522.6px;font-size:13px;color:#222;font-weight:normal;letter-spacing:0.975px;font-family:'Liberation Sans', sans-serif;-webkit-text-stroke:0.1px currentColor;">1 fireworks bg</div>
<div class="t" style="left:1070.3px;top:522.6px;font-size:13px;color:#222;font-weight:normal;letter-spacing:0.047px;font-family:'Liberation Sans', sans-serif;-webkit-text-stroke:0.1px currentColor;">LOGGED</div>
<div class="r" style="left:86px;top:542px;width:1083px;height:24px;background:#f3f3f3"></div>
<div class="r" style="left:338px;top:542px;width:1px;height:24px;background:#c6c6cc"></div>
<div class="r" style="left:438px;top:542px;width:1px;height:24px;background:#c6c6cc"></div>
<div class="r" style="left:564px;top:542px;width:1px;height:24px;background:#c6c6cc"></div>
<div class="r" style="left:690px;top:542px;width:1px;height:24px;background:#c6c6cc"></div>
<div class="r" style="left:1068px;top:542px;width:1px;height:24px;background:#c6c6cc"></div>
<div class="t" style="left:87.0px;top:547.6px;font-size:13px;color:#222;font-weight:normal;letter-spacing:0.806px;font-family:'Liberation Sans', sans-serif;-webkit-text-stroke:0.1px currentColor;">Local Arrival</div>
<div class="t" style="left:340.4px;top:547.6px;font-size:13px;color:#222;font-weight:normal;letter-spacing:0.233px;font-family:'Liberation Sans', sans-serif;-webkit-text-stroke:0.1px currentColor;">LA</div>
<div class="t" style="left:440.6px;top:547.6px;font-size:13px;color:#222;font-weight:normal;letter-spacing:1.542px;font-family:'Liberation Sans', sans-serif;-webkit-text-stroke:0.1px currentColor;">10/22/2011</div>
<div class="t" style="left:567.1px;top:547.6px;font-size:13px;color:#222;font-weight:normal;letter-spacing:1.611px;font-family:'Liberation Sans', sans-serif;-webkit-text-stroke:0.1px currentColor;">02:30</div>
<div class="t" style="left:693.2px;top:547.6px;font-size:13px;color:#222;font-weight:normal;letter-spacing:1.247px;font-family:'Liberation Sans', sans-serif;-webkit-text-stroke:0.1px currentColor;">1 bg</div>
<div class="t" style="left:1070.3px;top:547.6px;font-size:13px;color:#222;font-weight:normal;letter-spacing:0.047px;font-family:'Liberation Sans', sans-serif;-webkit-text-stroke:0.1px currentColor;">LOGGED</div>
<div class="r" style="left:86px;top:567px;width:1083px;height:24px;background:#ffffff"></div>
<div class="r" style="left:338px;top:567px;width:1px;height:24px;background:#c6c6cc"></div>
<div class="r" style="left:438px;top:567px;width:1px;height:24px;background:#c6c6cc"></div>
<div class="r" style="left:564px;top:567px;width:1px;height:24px;background:#c6c6cc"></div>
<div class="r" style="left:690px;top:567px;width:1px;height:24px;background:#c6c6cc"></div>
<div class="r" style="left:1068px;top:567px;width:1px;height:24px;background:#c6c6cc"></div>
<div class="t" style="left:87.0px;top:572.6px;font-size:13px;color:#222;font-weight:normal;letter-spacing:0.806px;font-family:'Liberation Sans', sans-serif;-webkit-text-stroke:0.1px currentColor;">Local Arrival</div>
<div class="t" style="left:340.4px;top:572.6px;font-size:13px;color:#222;font-weight:normal;letter-spacing:0.259px;font-family:'Liberation Sans', sans-serif;-webkit-text-stroke:0.1px currentColor;">LB</div>
<div class="t" style="left:440.6px;top:572.6px;font-size:13px;color:#222;font-weight:normal;letter-spacing:1.542px;font-family:'Liberation Sans', sans-serif;-webkit-text-stroke:0.1px currentColor;">10/24/2011</div>
<div class="t" style="left:567.1px;top:572.6px;font-size:13px;color:#222;font-weight:normal;letter-spacing:1.611px;font-family:'Liberation Sans', sans-serif;-webkit-text-stroke:0.1px currentColor;">14:30</div>
<div class="t" style="left:693.2px;top:572.6px;font-size:13px;color:#222;font-weight:normal;letter-spacing:1.247px;font-family:'Liberation Sans', sans-serif;-webkit-text-stroke:0.1px currentColor;">1 bg</div>
<div class="t" style="left:1070.3px;top:572.6px;font-size:13px;color:#222;font-weight:normal;letter-spacing:0.047px;font-family:'Liberation Sans', sans-serif;-webkit-text-stroke:0.1px currentColor;">LOGGED</div>
<div class="r" style="left:86px;top:592px;width:1083px;height:23px;background:#f3f3f3"></div>
<div class="r" style="left:338px;top:592px;width:1px;height:23px;background:#c6c6cc"></div>
<div class="r" style="left:438px;top:592px;width:1px;height:23px;background:#c6c6cc"></div>
<div class="r" style="left:564px;top:592px;width:1px;height:23px;background:#c6c6cc"></div>
<div class="r" style="left:690px;top:592px;width:1px;height:23px;background:#c6c6cc"></div>
<div class="r" style="left:1068px;top:592px;width:1px;height:23px;background:#c6c6cc"></div>
<div class="t" style="left:87.0px;top:597.6px;font-size:13px;color:#222;font-weight:normal;letter-spacing:0.806px;font-family:'Liberation Sans', sans-serif;-webkit-text-stroke:0.1px currentColor;">Local Arrival</div>
<div class="t" style="left:340.4px;top:597.6px;font-size:13px;color:#222;font-weight:normal;letter-spacing:0.233px;font-family:'Liberation Sans', sans-serif;-webkit-text-stroke:0.1px currentColor;">LA</div>
<div class="t" style="left:440.6px;top:597.6px;font-size:13px;color:#222;font-weight:normal;letter-spacing:1.435px;font-family:'Liberation Sans', sans-serif;-webkit-text-stroke:0.1px currentColor;">01/19/2012</div>
<div class="t" style="left:567.1px;top:597.6px;font-size:13px;color:#222;font-weight:normal;letter-spacing:1.611px;font-family:'Liberation Sans', sans-serif;-webkit-text-stroke:0.1px currentColor;">08:00</div>
<div class="t" style="left:693.2px;top:597.6px;font-size:13px;color:#222;font-weight:normal;letter-spacing:1.247px;font-family:'Liberation Sans', sans-serif;-webkit-text-stroke:0.1px currentColor;">1 bg</div>
<div class="t" style="left:1070.3px;top:597.6px;font-size:13px;color:#222;font-weight:normal;letter-spacing:0.047px;font-family:'Liberation Sans', sans-serif;-webkit-text-stroke:0.1px currentColor;">LOGGED</div>
<div class="r" style="left:86px;top:616px;width:1083px;height:24px;background:#ffffff"></div>
<div class="r" style="left:338px;top:616px;width:1px;height:24px;background:#c6c6cc"></div>
<div class="r" style="left:438px;top:616px;width:1px;height:24px;background:#c6c6cc"></div>
<div class="r" style="left:564px;top:616px;width:1px;height:24px;background:#c6c6cc"></div>
<div class="r" style="left:690px;top:616px;width:1px;height:24px;background:#c6c6cc"></div>
<div class="r" style="left:1068px;top:616px;width:1px;height:24px;background:#c6c6cc"></div>
<div class="t" style="left:87.0px;top:621.6px;font-size:13px;color:#222;font-weight:normal;letter-spacing:0.861px;font-family:'Liberation Sans', sans-serif;-webkit-text-stroke:0.1px currentColor;">Construction</div>
<div class="t" style="left:340.4px;top:621.6px;font-size:13px;color:#222;font-weight:normal;letter-spacing:0.259px;font-family:'Liberation Sans', sans-serif;-webkit-text-stroke:0.1px currentColor;">LB</div>
<div class="t" style="left:440.6px;top:621.6px;font-size:13px;color:#222;font-weight:normal;letter-spacing:1.435px;font-family:'Liberation Sans', sans-serif;-webkit-text-stroke:0.1px currentColor;">08/07/2012</div>
<div class="t" style="left:567.1px;top:621.6px;font-size:13px;color:#222;font-weight:normal;letter-spacing:1.611px;font-family:'Liberation Sans', sans-serif;-webkit-text-stroke:0.1px currentColor;">01:55</div>
<div class="t" style="left:693.2px;top:621.6px;font-size:13px;color:#222;font-weight:normal;letter-spacing:1.247px;font-family:'Liberation Sans', sans-serif;-webkit-text-stroke:0.1px currentColor;">1 bg</div>
<div class="t" style="left:1070.3px;top:621.6px;font-size:13px;color:#222;font-weight:normal;letter-spacing:0.047px;font-family:'Liberation Sans', sans-serif;-webkit-text-stroke:0.1px currentColor;">LOGGED</div>
<div class="r" style="left:86px;top:641px;width:1083px;height:24px;background:#f3f3f3"></div>
<div class="r" style="left:338px;top:641px;width:1px;height:24px;background:#c6c6cc"></div>
<div class="r" style="left:438px;top:641px;width:1px;height:24px;background:#c6c6cc"></div>
<div class="r" style="left:564px;top:641px;width:1px;height:24px;background:#c6c6cc"></div>
<div class="r" style="left:690px;top:641px;width:1px;height:24px;background:#c6c6cc"></div>
<div class="r" style="left:1068px;top:641px;width:1px;height:24px;background:#c6c6cc"></div>
<div class="t" style="left:87.0px;top:646.6px;font-size:13px;color:#222;font-weight:normal;letter-spacing:0.861px;font-family:'Liberation Sans', sans-serif;-webkit-text-stroke:0.1px currentColor;">Construction</div>
<div class="t" style="left:340.4px;top:646.6px;font-size:13px;color:#222;font-weight:normal;letter-spacing:0.259px;font-family:'Liberation Sans', sans-serif;-webkit-text-stroke:0.1px currentColor;">LB</div>
<div class="t" style="left:440.6px;top:646.6px;font-size:13px;color:#222;font-weight:normal;letter-spacing:1.435px;font-family:'Liberation Sans', sans-serif;-webkit-text-stroke:0.1px currentColor;">08/12/2012</div>
<div class="t" style="left:567.1px;top:646.6px;font-size:13px;color:#222;font-weight:normal;letter-spacing:1.611px;font-family:'Liberation Sans', sans-serif;-webkit-text-stroke:0.1px currentColor;">13:20</div>
<div class="t" style="left:693.2px;top:646.6px;font-size:13px;color:#222;font-weight:normal;letter-spacing:1.012px;font-family:'Liberation Sans', sans-serif;-webkit-text-stroke:0.1px currentColor;">1 mud scow</div>
<div class="t" style="left:1070.3px;top:646.6px;font-size:13px;color:#222;font-weight:normal;letter-spacing:0.047px;font-family:'Liberation Sans', sans-serif;-webkit-text-stroke:0.1px currentColor;">LOGGED</div>
<div class="r" style="left:86px;top:666px;width:1083px;height:24px;background:#ffffff"></div>
<div class="r" style="left:338px;top:666px;width:1px;height:24px;background:#c6c6cc"></div>
<div class="r" style="left:438px;top:666px;width:1px;height:24px;background:#c6c6cc"></div>
<div class="r" style="left:564px;top:666px;width:1px;height:24px;background:#c6c6cc"></div>
<div class="r" style="left:690px;top:666px;width:1px;height:24px;background:#c6c6cc"></div>
<div class="r" style="left:1068px;top:666px;width:1px;height:24px;background:#c6c6cc"></div>
<div class="t" style="left:87.0px;top:671.6px;font-size:13px;color:#222;font-weight:normal;letter-spacing:0.806px;font-family:'Liberation Sans', sans-serif;-webkit-text-stroke:0.1px currentColor;">Local Arrival</div>
<div class="t" style="left:340.4px;top:671.6px;font-size:13px;color:#222;font-weight:normal;letter-spacing:0.259px;font-family:'Liberation Sans', sans-serif;-webkit-text-stroke:0.1px currentColor;">LB</div>
<div class="t" style="left:440.6px;top:671.6px;font-size:13px;color:#222;font-weight:normal;letter-spacing:1.435px;font-family:'Liberation Sans', sans-serif;-webkit-text-stroke:0.1px currentColor;">01/17/2013</div>
<div class="t" style="left:567.1px;top:671.6px;font-size:13px;color:#222;font-weight:normal;letter-spacing:1.611px;font-family:'Liberation Sans', sans-serif;-webkit-text-stroke:0.1px currentColor;">12:20</div>
<div class="t" style="left:693.2px;top:671.6px;font-size:13px;color:#222;font-weight:normal;letter-spacing:1.126px;font-family:'Liberation Sans', sans-serif;-webkit-text-stroke:0.1px currentColor;">l bg</div>
<div class="t" style="left:1070.3px;top:671.6px;font-size:13px;color:#222;font-weight:normal;letter-spacing:0.047px;font-family:'Liberation Sans', sans-serif;-webkit-text-stroke:0.1px currentColor;">LOGGED</div>
<div class="r" style="left:86px;top:691px;width:1083px;height:23px;background:#f3f3f3"></div>
<div class="r" style="left:338px;top:691px;width:1px;height:23px;background:#c6c6cc"></div>
<div class="r" style="left:438px;top:691px;width:1px;height:23px;background:#c6c6cc"></div>
<div class="r" style="left:564px;top:691px;width:1px;height:23px;background:#c6c6cc"></div>
<div class="r" style="left:690px;top:691px;width:1px;height:23px;background:#c6c6cc"></div>
<div class="r" style="left:1068px;top:691px;width:1px;height:23px;background:#c6c6cc"></div>
<div class="t" style="left:86.9px;top:696.6px;font-size:13px;color:#222;font-weight:normal;letter-spacing:0.879px;font-family:'Liberation Sans', sans-serif;-webkit-text-stroke:0.1px currentColor;">Local / Misc Event Complete</div>
<div class="t" style="left:340.4px;top:696.6px;font-size:13px;color:#222;font-weight:normal;letter-spacing:1.592px;font-family:'Liberation Sans', sans-serif;-webkit-text-stroke:0.1px currentColor;">-----</div>
<div class="t" style="left:440.6px;top:696.6px;font-size:13px;color:#222;font-weight:normal;letter-spacing:0.0px;font-family:'Liberation Sans', sans-serif;-webkit-text-stroke:0.1px currentColor;"></div>
<div class="t" style="left:567.1px;top:696.6px;font-size:13px;color:#222;font-weight:normal;letter-spacing:0.0px;font-family:'Liberation Sans', sans-serif;-webkit-text-stroke:0.1px currentColor;"></div>
<div class="t" style="left:693.2px;top:696.6px;font-size:13px;color:#222;font-weight:normal;letter-spacing:0.0px;font-family:'Liberation Sans', sans-serif;-webkit-text-stroke:0.1px currentColor;"></div>
<div class="t" style="left:1070.3px;top:696.6px;font-size:13px;color:#222;font-weight:normal;letter-spacing:0.155px;font-family:'Liberation Sans', sans-serif;-webkit-text-stroke:0.1px currentColor;">DUE</div>
<div class="r" style="left:86px;top:318px;width:1083px;height:1px;background:#15157c"></div>
<div class="r" style="left:86px;top:343px;width:1083px;height:1px;background:#15157c"></div>
<div class="r" style="left:86px;top:368px;width:1083px;height:1px;background:#15157c"></div>
<div class="r" style="left:86px;top:393px;width:1083px;height:1px;background:#15157c"></div>
<div class="r" style="left:86px;top:417px;width:1083px;height:1px;background:#15157c"></div>
<div class="r" style="left:86px;top:442px;width:1083px;height:1px;background:#15157c"></div>
<div class="r" style="left:86px;top:467px;width:1083px;height:1px;background:#15157c"></div>
<div class="r" style="left:86px;top:492px;width:1083px;height:1px;background:#15157c"></div>
<div class="r" style="left:86px;top:516px;width:1083px;height:1px;background:#15157c"></div>
<div class="r" style="left:86px;top:541px;width:1083px;height:1px;background:#15157c"></div>
<div class="r" style="left:86px;top:566px;width:1083px;height:1px;background:#15157c"></div>
<div class="r" style="left:86px;top:591px;width:1083px;height:1px;background:#15157c"></div>
<div class="r" style="left:86px;top:615px;width:1083px;height:1px;background:#15157c"></div>
<div class="r" style="left:86px;top:640px;width:1083px;height:1px;background:#15157c"></div>
<div class="r" style="left:86px;top:665px;width:1083px;height:1px;background:#15157c"></div>
<div class="r" style="left:86px;top:690px;width:1083px;height:1px;background:#15157c"></div>
<div class="r" style="left:86px;top:714px;width:1083px;height:1px;background:#15157c"></div>
<div class="r" style="left:86px;top:715px;width:1100px;height:1px;background:#c8c8e4"></div>
<div class="r" style="left:1169px;top:316px;width:17px;height:400px;background:#f0f0f0"></div>
<div class="r" style="left:1170px;top:615px;width:15px;height:67px;background:#c8c8c8"></div>
<svg style="left:1171px;top:330px" width="13" height="12" viewBox="0 0 13 12"><path d="M1.5 9.5 L6.5 4.5 L11.5 9.5" fill="none" stroke="#606060" stroke-width="2.2"/></svg>
<svg style="left:1171px;top:688px" width="13" height="12" viewBox="0 0 13 12"><path d="M1.5 2.5 L6.5 7.5 L11.5 2.5" fill="none" stroke="#606060" stroke-width="2.2"/></svg>
<div class="r" style="left:86px;top:716px;width:1100px;height:35px;background:linear-gradient(#f6f6f6,#e6e6e6)"></div>
<div class="r" style="left:91px;top:720px;width:124px;height:28px;background:linear-gradient(#f8f8f8,#e8e8e8);border:1px solid #c8c8c8;border-radius:4px"></div>
<svg style="left:98px;top:728px" width="12" height="12" viewBox="0 0 12 12"><path d="M6 1 V11 M1 6 H11" stroke="#555" stroke-width="1.8"/></svg>
<div class="t" style="left:115.2px;top:728.3px;font-size:13px;color:#222;font-weight:normal;letter-spacing:1.016px;font-family:'Liberation Sans', sans-serif;-webkit-text-stroke:0.1px currentColor;">Add new item</div>
<div class="r" style="left:85px;top:768px;width:1156px;height:22px;background:#808080"></div>
<div class="t" style="left:85px;width:1156px;top:771.3px;font-size:15px;color:#fff;text-align:center;letter-spacing:1.201px;text-indent:1.201px">Comments</div>
<div class="t" style="left:85.7px;top:794.0px;font-size:13px;color:#111;font-weight:normal;letter-spacing:0.913px;font-family:'Liberation Sans', sans-serif;-webkit-text-stroke:0.1px currentColor;">logged as commercial assist on 8/30 per Joyce... Reid</div>
<div class="r" style="left:1221px;top:791px;width:16px;height:75px;background:#f9f9f9"></div>
<svg style="left:1222px;top:805px" width="13" height="12" viewBox="0 0 13 12"><path d="M1.5 9.5 L6.5 4 L11.5 9.5" fill="none" stroke="#c8c8c8" stroke-width="2.6"/></svg>
<svg style="left:1222px;top:839px" width="13" height="12" viewBox="0 0 13 12"><path d="M1.5 2.5 L6.5 8 L11.5 2.5" fill="none" stroke="#c8c8c8" stroke-width="2.6"/></svg>
<div class="r" style="left:602px;top:867px;width:55px;height:25px;background:linear-gradient(#f2f2f2,#d8d8d8);border:1px solid #777"></div>
<div class="t" style="left:613.0px;top:874.0px;font-size:13px;color:#222;font-weight:normal;letter-spacing:0.84px;font-family:'Liberation Sans', sans-serif;-webkit-text-stroke:0.1px currentColor;">Save</div>
<div class="r" style="left:666px;top:867px;width:58px;height:25px;background:linear-gradient(#f2f2f2,#d8d8d8);border:1px solid #777"></div>
<div class="t" style="left:676.6px;top:874.0px;font-size:13px;color:#222;font-weight:normal;letter-spacing:0.453px;font-family:'Liberation Sans', sans-serif;-webkit-text-stroke:0.1px currentColor;">Close</div>
<div class="r" style="left:632px;top:936px;width:45px;height:23px;background:linear-gradient(#dedede,#cacaca);border:1px solid #888"></div>
<div class="t" style="left:643.5px;top:940.7px;font-size:13px;color:#444;font-weight:normal;letter-spacing:0px;font-family:'Liberation Sans', sans-serif;">Edit</div>
<div class="r" style="left:0px;top:0px;width:1326px;height:1px;background:#1d3440"></div>
<div class="r" style="left:0px;top:0px;width:1px;height:979px;background:#1d3440"></div>
<div class="r" style="left:1325px;top:0px;width:1px;height:979px;background:#1d3440"></div>
<div class="r" style="left:0px;top:978px;width:1326px;height:1px;background:#1d3440"></div>
</body></html>
